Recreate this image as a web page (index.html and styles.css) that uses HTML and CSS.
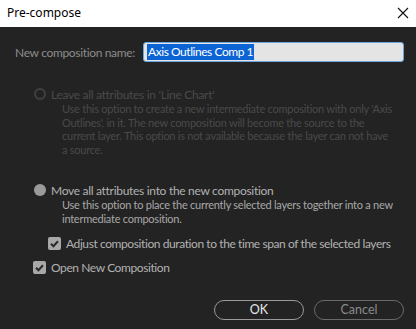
FILE: index.html
```html
<!DOCTYPE html>
<html>
<head>
<meta charset="utf-8">
<link rel="stylesheet" href="styles.css">
</head>
<body>
<div class="dialog">
  <div class="titlebar">
    <span class="title">Pre-compose</span>
    <svg class="close" width="12" height="12" viewBox="0 0 12 12"><path d="M1 1L11 11M11 1L1 11" stroke="#111" stroke-width="1.1" fill="none"/></svg>
  </div>
  <div class="body">
    <div class="name-row">
      <span class="label">New composition name:</span>
      <div class="input"><span class="sel">Axis Outlines Comp 1</span></div>
    </div>

    <div class="option disabled first">
      <div class="opt-head"><span class="radio ring"></span><span class="opt-title">Leave all attributes in 'Line Chart'</span></div>
      <div class="desc">Use this option to create a new intermediate composition with only 'Axis Outlines', in it. The new composition will become the source to the current layer. This option is not available because the layer can not have a source.</div>
    </div>

    <div class="option second">
      <div class="opt-head"><span class="radio filled"></span><span class="opt-title">Move all attributes into the new composition</span></div>
      <div class="desc">Use this option to place the currently selected layers together into a new intermediate composition.</div>
      <div class="check-row sub"><span class="checkbox"><svg width="13" height="13" viewBox="0 0 13 13"><path d="M3 6.8L5.4 9.2L10 4.2" stroke="#2a2a2a" stroke-width="2" fill="none"/></svg></span><span class="check-label">Adjust composition duration to the time span of the selected layers</span></div>
    </div>

    <div class="check-row open"><span class="checkbox"><svg width="13" height="13" viewBox="0 0 13 13"><path d="M3 6.8L5.4 9.2L10 4.2" stroke="#2a2a2a" stroke-width="2" fill="none"/></svg></span><span class="check-label">Open New Composition</span></div>

    <div class="buttons">
      <button class="btn ok">OK</button>
      <button class="btn cancel">Cancel</button>
    </div>
  </div>
</div>
</body>
</html>
```

FILE: styles.css
```css
* {
  box-sizing: border-box;
}
html, body {
  margin: 0;
  padding: 0;
}
body {
  width: 416px;
  height: 329px;
  background: #232323;
  font-family: "Lato", "Open Sans", sans-serif;
  overflow: hidden;
}
.dialog {
  width: 416px;
  height: 329px;
  display: flex;
  flex-direction: column;
}
.titlebar {
  height: 27px;
  background: #ffffff;
  display: flex;
  align-items: center;
  justify-content: space-between;
  padding: 0 7px 0 7px;
  flex-shrink: 0;
}
.title {
  font-family: "Noto Sans", sans-serif;
  font-size: 12px;
  color: #000;
  margin-top: -2px;
}
.close {
  margin-top: -1px;
}
.body {
  padding: 15px 12px 0 15px;
  font-size: 11px;
}
.name-row {
  display: flex;
  align-items: center;
  height: 20px;
}
.label {
  color: #8c8c8c;
  width: 128px;
  font-size: 12px;
  letter-spacing: -0.34px;
}
.input {
  width: 261px;
  height: 20px;
  background: #e4e4e4;
  border: 1px solid #6aa6e0;
  border-radius: 3px;
  display: flex;
  align-items: center;
  padding-left: 3px;
}
.sel {
  background: #0c63d4;
  color: #fff;
  font-size: 12px;
  letter-spacing: -0.45px;
  line-height: 16px;
  padding: 0 1px;
}
.option {
  margin-left: 19px;
}
.first {
  margin-top: 25px;
}
.second {
  margin-top: 27px;
}
.opt-head {
  display: flex;
  align-items: center;
  height: 14px;
}
.radio {
  width: 12px;
  height: 12px;
  border-radius: 50%;
  margin-right: 5px;
  flex-shrink: 0;
}
.ring {
  border: 2px solid #404040;
}
.filled {
  background: #9a9a9a;
}
.opt-title {
  font-size: 12px;
  letter-spacing: -0.3px;
  color: #b2b2b2;
}
.disabled .opt-title {
  color: #4a4a4a;
}
.desc {
  margin-left: 28px;
  margin-top: 1px;
  line-height: 13.6px;
  color: #a8a8a8;
  width: 332px;
  font-size: 11px;
  letter-spacing: -0.25px;
}
.disabled .desc {
  color: #4a4a4a;
}
.check-row {
  display: flex;
  align-items: center;
  height: 14px;
  white-space: nowrap;
}
.check-row.sub {
  margin-top: 11px;
  margin-left: 14px;
}
.check-row.open {
  margin-top: 10px;
  margin-left: 18px;
}
.checkbox {
  width: 13px;
  height: 13px;
  background: #a8a8a8;
  border-radius: 2px;
  margin-right: 5px;
  display: flex;
  flex-shrink: 0;
}
.check-label {
  font-size: 12px;
  letter-spacing: -0.41px;
  color: #b2b2b2;
}
.buttons {
  display: flex;
  justify-content: flex-end;
  gap: 10px;
  margin-top: 25px;
}
.btn {
  width: 90px;
  height: 20px;
  border-radius: 10px;
  background: transparent;
  font-family: "Lato", "Open Sans", sans-serif;
  font-size: 12.5px;
  padding: 0;
  line-height: 16px;
}
.ok {
  border: 1px solid #9a9a9a;
  color: #e8e8e8;
}
.cancel {
  border: 1px solid #6a6a6a;
  color: #8a8a8a;
}
```
